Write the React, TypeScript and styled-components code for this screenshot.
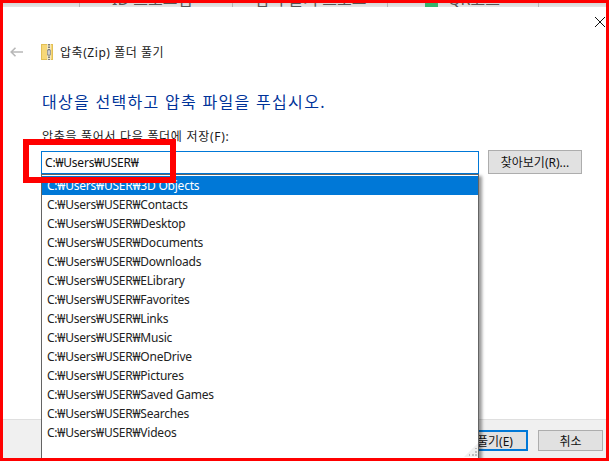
import React, { ReactElement } from 'react';
import styled, { createGlobalStyle } from 'styled-components';

const folders = [
  '3D Objects', 'Contacts', 'Desktop', 'Documents', 'Downloads', 'ELibrary', 'Favorites',
  'Links', 'Music', 'OneDrive', 'Pictures', 'Saved Games', 'Searches', 'Videos',
];

const GlobalStyle = createGlobalStyle`
  html, body { margin: 0; padding: 0; background: #fff; }
  body {
    font-family: "Noto Sans", "Noto Sans CJK KR", sans-serif;
    font-size: 12px;
    color: #1a1a1a;
  }
`;

const Frame = styled.div`
  box-sizing: border-box;
  width: 609px;
  height: 461px;
  border: 3px solid #ff0000;
  overflow: hidden;
  display: flex;
  flex-direction: column;
  background: #fff;
`;

const TabStrip = styled.div`
  flex: none;
  height: 4px;
  overflow: hidden;
  display: grid;
  grid-template-columns: 76px 153px 155px 151px 1fr;
  background: linear-gradient(#d6d6d6, #e6e6e6);
`;

const StripTab = styled.div<{ $pad: number }>`
  display: flex;
  align-items: flex-end;
  gap: 10px;
  height: 4px;
  padding-left: ${(p) => p.$pad}px;
  border-left: 1px solid #b4b4b4;
  font-size: 16px;
  line-height: 16px;
  white-space: nowrap;
  color: #555;
  &:first-child { border-left: 0; }
`;

const GreenMark = styled.span`
  flex: none;
  width: 13px;
  height: 16px;
  background: #35b56e;
`;

const Body = styled.div`
  flex: 1;
  min-height: 0;
  display: flex;
  flex-direction: column;
  padding: 0 24px 0 38px;
  position: relative;
`;

const CloseButton = styled.button`
  position: absolute;
  top: 10px;
  right: 1px;
  width: 10px;
  height: 10px;
  padding: 0;
  border: 0;
  background: none;
  line-height: 0;
`;

const BackButton = styled.button`
  position: absolute;
  top: 40px;
  left: 7px;
  width: 13px;
  height: 10px;
  padding: 0;
  border: 0;
  background: none;
  line-height: 0;
`;

const TitleRow = styled.div`
  display: flex;
  align-items: center;
  gap: 7px;
  height: 16px;
  margin-top: 37px;
`;

const Title = styled.span`
  font-size: 12px;
  letter-spacing: 0.55px;
  color: #1a1a1a;
`;

const Heading = styled.h1`
  margin: 32px 0 0 1px;
  font-size: 16px;
  font-weight: 400;
  line-height: 20px;
  letter-spacing: 1.3px;
  color: #003399;
`;

const FieldLabel = styled.label`
  display: block;
  margin: 16px 0 0 1px;
  font-size: 12px;
  line-height: 18px;
  letter-spacing: 0.7px;
  color: #1a1a1a;
`;

const FieldRow = styled.div`
  display: flex;
  gap: 9px;
  margin-top: 5px;
`;

const InputWrap = styled.div`
  position: relative;
  width: 438px;
`;

const PathInput = styled.div`
  box-sizing: border-box;
  height: 23px;
  padding-left: 3px;
  border: 1px solid #0078d7;
  line-height: 21px;
  letter-spacing: -0.2px;
  color: #111;
`;

const Dropdown = styled.ul`
  position: absolute;
  top: 23px;
  left: 0;
  right: 0;
  z-index: 1;
  height: 300px;
  margin: 0;
  padding: 1px 0 0;
  list-style: none;
  background: #fff;
  border-left: 1px solid #646464;
  border-right: 1px solid #646464;
  border-top: 1px solid #646464;
  box-shadow: 3px 2px 3px rgba(0, 0, 0, 0.4);
`;

const DropdownRow = styled.li<{ $active?: boolean }>`
  height: 19px;
  padding-left: 5px;
  line-height: 19px;
  letter-spacing: -0.22px;
  color: ${(p) => (p.$active ? '#fff' : '#222')};
  background: ${(p) => (p.$active ? '#0078d7' : 'transparent')};
`;

const Grip = styled.svg`
  position: absolute;
  right: 0;
  top: 268px;
`;

const Annotation = styled.div`
  position: absolute;
  top: -12px;
  left: -18px;
  z-index: 2;
  box-sizing: border-box;
  width: 153px;
  height: 44px;
  border: 6px solid #ff0000;
`;

const BrowseButton = styled.button`
  flex: none;
  box-sizing: border-box;
  width: 94px;
  height: 24px;
  margin-top: -1px;
  padding: 0;
  border: 1px solid #adadad;
  background: #e1e1e1;
  font: inherit;
  color: #111;
`;

const Footer = styled.div`
  flex: none;
  box-sizing: border-box;
  height: 39px;
  display: flex;
  justify-content: flex-end;
  gap: 10px;
  padding: 10px 3px 0 0;
  background: #f0f0f0;
  border-top: 1px solid #dfdfdf;
`;

const FooterButton = styled.button<{ $primary?: boolean }>`
  box-sizing: border-box;
  width: ${(p) => (p.$primary ? 66 : 65)}px;
  height: 21px;
  padding: 0;
  border: ${(p) => (p.$primary ? '2px solid #0078d7' : '1px solid #adadad')};
  background: #e1e1e1;
  font: inherit;
  color: #111;
`;

const App = (): ReactElement => (
  <>
    <GlobalStyle />
    <Frame>
      <TabStrip>
        <StripTab $pad={0} />
        <StripTab $pad={32}>ID 프로그램</StripTab>
        <StripTab $pad={22}>압축 풀기 프로그</StripTab>
        <StripTab $pad={37}>
          <GreenMark />
          QR코드
        </StripTab>
        <StripTab $pad={0} />
      </TabStrip>
      <Body>
        <CloseButton aria-label="닫기">
          <svg width="10" height="10" viewBox="0 0 10 10">
            <path d="M0 0L10 10M10 0L0 10" stroke="#111" strokeWidth="1" fill="none" />
          </svg>
        </CloseButton>
        <BackButton aria-label="뒤로">
          <svg width="13" height="10" viewBox="0 0 13 10">
            <path d="M13 5H1.5M5.5 .7L1.2 5l4.3 4.3" stroke="#b8b8b8" strokeWidth="1.6" fill="none" />
          </svg>
        </BackButton>
        <TitleRow>
          <svg width="12" height="16" viewBox="0 0 12 16">
            <rect x=".5" y=".5" width="11" height="15" fill="#f7d878" stroke="#e2bf55" />
            <rect x="6" y="0" width="4" height="16" fill="#f3e7bd" />
            <path d="M8 0v16" stroke="#7f7f7f" strokeWidth="2" strokeDasharray="1.5 1" />
            <rect x="6.5" y="6" width="3" height="5" fill="#cfcfcf" stroke="#777" strokeWidth=".6" />
          </svg>
          <Title>압축(Zip) 폴더 풀기</Title>
        </TitleRow>
        <Heading>대상을 선택하고 압축 파일을 푸십시오.</Heading>
        <FieldLabel>압축을 풀어서 다음 폴더에 저장(F):</FieldLabel>
        <FieldRow>
          <InputWrap>
            <PathInput>C:₩Users₩USER₩</PathInput>
            <Dropdown>
              {folders.map((name, i) => (
                <DropdownRow key={name} $active={i === 0}>{`C:₩Users₩USER₩${name}`}</DropdownRow>
              ))}
              <Grip width="14" height="14" viewBox="0 0 14 14">
                <path d="M14 0V14H0Z" fill="#f0f0f0" />
                <path d="M8 11h2v2H8zM11 11h2v2h-2zM11 8h2v2h-2zM5 11h1v2H5zM11 5h2v1h-2z" fill="#bdbdbd" />
              </Grip>
            </Dropdown>
            <Annotation />
          </InputWrap>
          <BrowseButton>찾아보기(R)...</BrowseButton>
        </FieldRow>
      </Body>
      <Footer>
        <FooterButton $primary>풀기(E)</FooterButton>
        <FooterButton>취소</FooterButton>
      </Footer>
    </Frame>
  </>
);

export default App;
